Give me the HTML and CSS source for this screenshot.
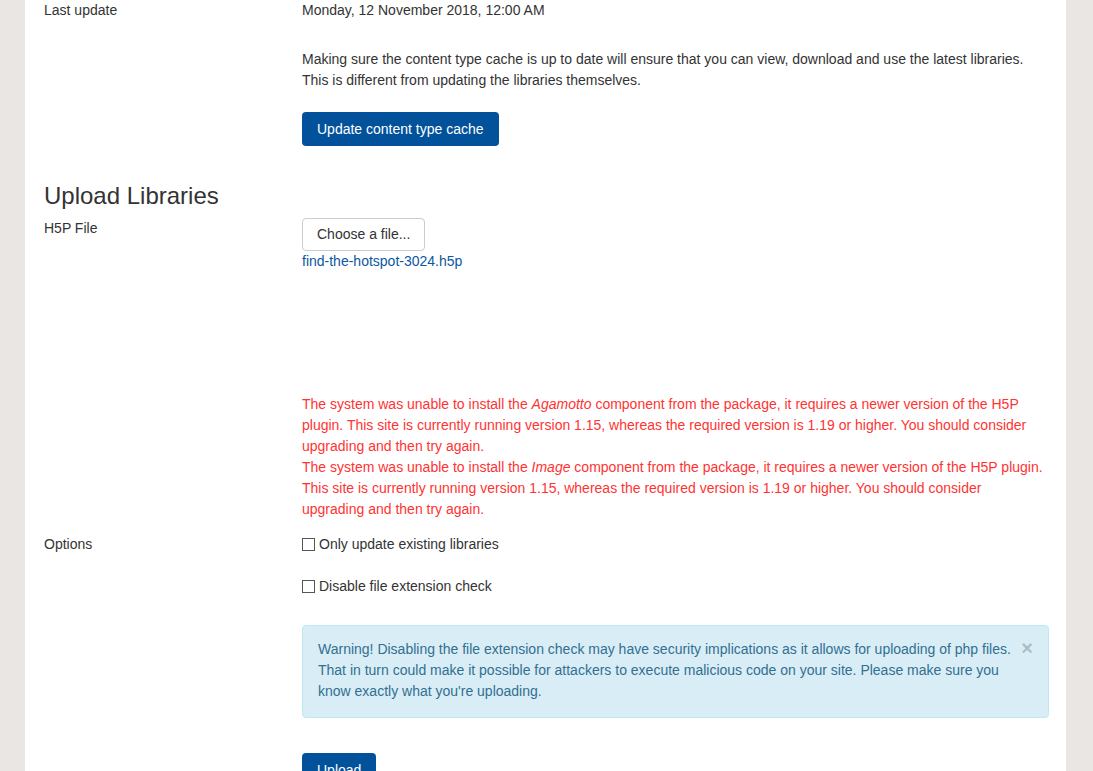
FILE: index.html
```html
<!DOCTYPE html>
<html lang="en">
<head>
    <meta charset="UTF-8">
    <title>H5P Manage Libraries</title>
    <link rel="stylesheet" href="styles.css">
</head>
<body>
    <div class="page">
        <div class="form-row row-date">
            <div class="label">Last update</div>
            <div class="value">Monday, 12 November 2018, 12:00 AM</div>
        </div>
        <div class="form-row row-cache">
            <div class="label"></div>
            <div class="value">
                <p class="note">Making sure the content type cache is up to date will ensure that you can view, download and use the latest libraries. This is different from updating the libraries themselves.</p>
                <button class="btn btn-primary">Update content type cache</button>
            </div>
        </div>

        <h2>Upload Libraries</h2>

        <div class="form-row row-file">
            <div class="label">H5P File</div>
            <div class="value">
                <button class="btn btn-default">Choose a file...</button>
                <div><a class="file-link" href="#">find-the-hotspot-3024.h5p</a></div>
                <div class="errors">
                    <div>The system was unable to install the <em>Agamotto</em> component from the package, it requires a newer version of the H5P plugin. This site is currently running version 1.15, whereas the required version is 1.19 or higher. You should consider upgrading and then try again.</div>
                    <div>The system was unable to install the <em>Image</em> component from the package, it requires a newer version of the H5P plugin. This site is currently running version 1.15, whereas the required version is 1.19 or higher. You should consider upgrading and then try again.</div>
                </div>
            </div>
        </div>

        <div class="form-row row-options">
            <div class="label">Options</div>
            <div class="value">
                <label class="check"><input type="checkbox"> Only update existing libraries</label>
                <label class="check"><input type="checkbox"> Disable file extension check</label>
                <div class="alert">
                    <span class="close">&times;</span>
                    Warning! Disabling the file extension check may have security implications as it allows for uploading of php files. That in turn could make it possible for attackers to execute malicious code on your site. Please make sure you know exactly what you're uploading.
                </div>
                <button class="btn btn-primary btn-upload">Upload</button>
            </div>
        </div>
    </div>
</body>
</html>
```

FILE: styles.css
```css
body {
    margin: 0;
    background-color: #e9e6e3;
    font-family: 'Liberation Sans', Arial, sans-serif;
    font-size: 14px;
    line-height: 21px;
    color: #333;
}

.page {
    margin: 0 27px 0 25px;
    padding: 0 17px 0 19px;
    background-color: #fff;
    min-height: 771px;
}

.form-row {
    display: grid;
    grid-template-columns: 258px 1fr;
}

.row-date {
    margin-bottom: 28px;
}

.row-cache {
    margin-bottom: 35px;
}

.note {
    margin: 0 0 21px;
}

h2 {
    margin: 0 0 7px;
    font-size: 24px;
    line-height: 30px;
    font-weight: normal;
    color: #333;
}

.btn {
    font-family: inherit;
    font-size: 14px;
    line-height: 20px;
    border-radius: 4px;
    cursor: pointer;
}

.btn-primary {
    padding: 7px 15px;
    border: none;
    background-color: #01529b;
    color: #fff;
}

.btn-default {
    padding: 5px 14px;
    line-height: 21px;
    border: 1px solid #ccc;
    background-color: #fff;
    color: #333;
}

.file-link {
    color: #0b57a0;
    text-decoration: none;
}

.errors {
    margin-top: 122px;
    margin-bottom: 14px;
    padding-right: 6px;
    color: #f33;
}

.check {
    display: flex;
    align-items: center;
    margin-bottom: 21px;
}

.check input {
    appearance: none;
    width: 13px;
    height: 13px;
    margin: 0 4px 0 0;
    border: 1px solid #555;
    background: #fff;
    border-radius: 0;
}

.alert {
    position: relative;
    margin-top: 28px;
    padding: 13px 35px 15px 15px;
    border: 1px solid #bce8f1;
    border-radius: 4px;
    background-color: #d9edf7;
    color: #31708f;
}

.close {
    position: absolute;
    top: 12px;
    right: 15px;
    font-size: 20px;
    font-weight: bold;
    color: #000;
    opacity: 0.2;
}

.btn-upload {
    margin-top: 35px;
}
```
